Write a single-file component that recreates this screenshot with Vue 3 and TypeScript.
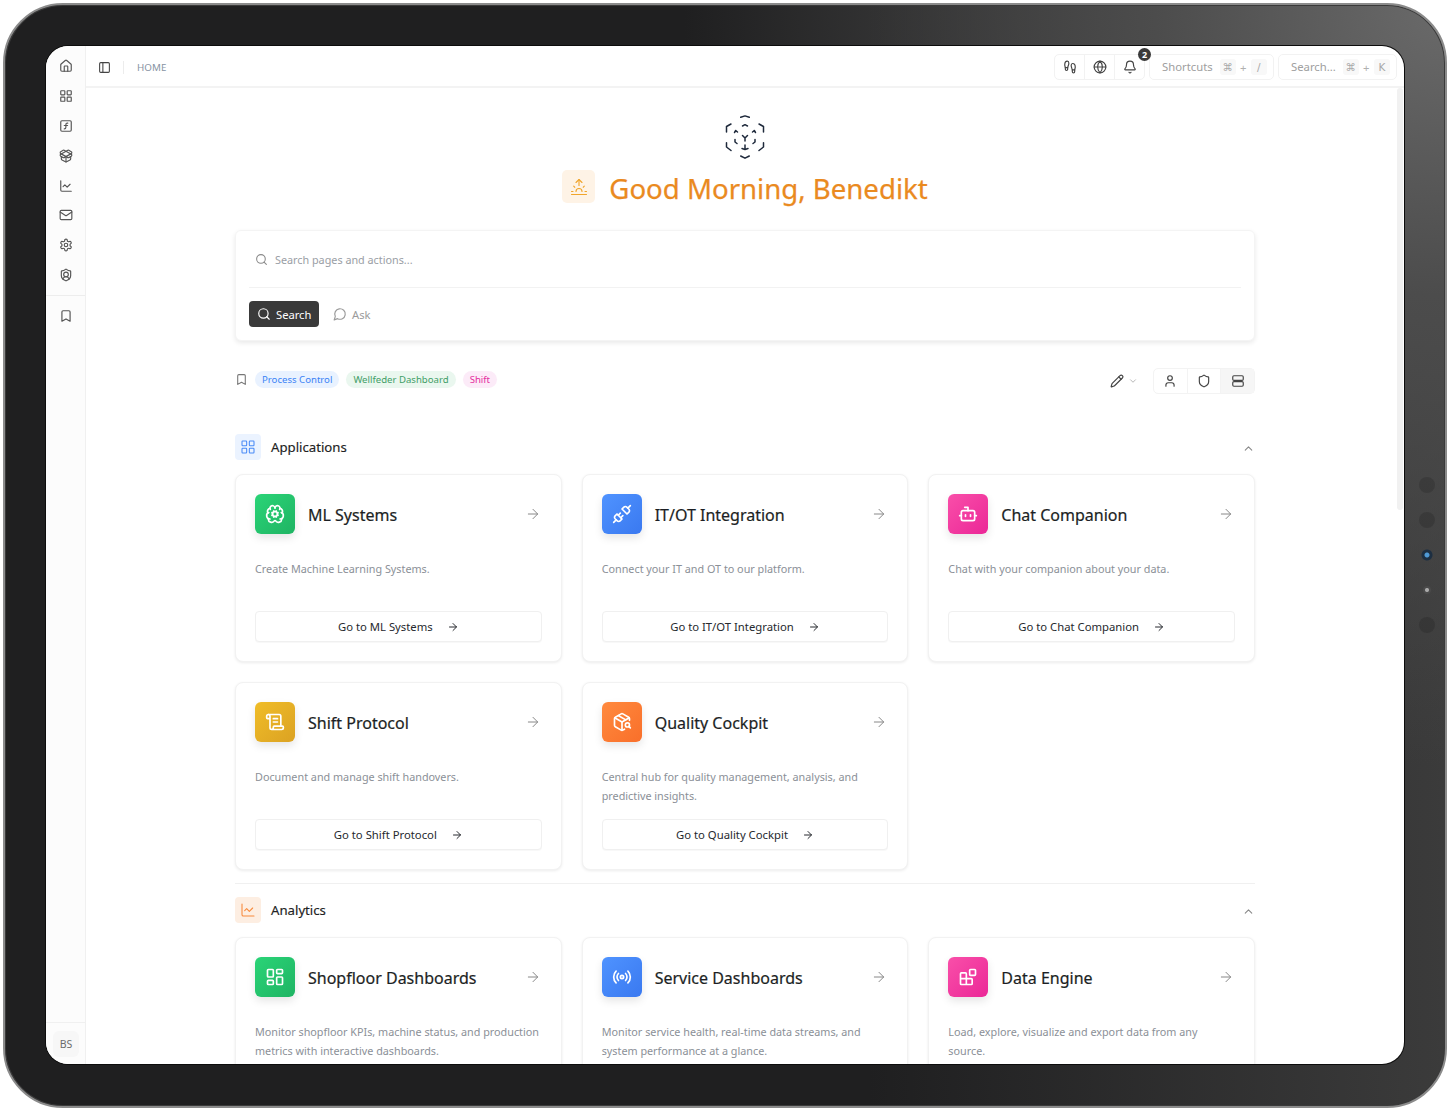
<template>
  <div class="device">
    <div class="sensors">
      <span class="dot"></span>
      <span class="dot"></span>
      <span class="dot cam"></span>
      <span class="dot mic"></span>
      <span class="dot"></span>
    </div>
    <div class="screen">
      <aside class="rail">
        <a v-for="n in railTop" :key="n" class="rail-btn">
          <svg class="ico" viewBox="0 0 24 24" v-html="icons[n]"></svg>
        </a>
        <div class="rail-line"></div>
        <a class="rail-btn bm">
          <svg class="ico" viewBox="0 0 24 24" v-html="icons.bookmark"></svg>
        </a>
        <div class="rail-foot">
          <span class="avatar">BS</span>
        </div>
      </aside>

      <div class="main">
        <header class="topbar">
          <svg class="ico panel" viewBox="0 0 24 24" v-html="icons.panel"></svg>
          <span class="top-sep"></span>
          <span class="crumb">HOME</span>
          <div class="top-right">
            <div class="btn-group">
              <button><svg class="ico" viewBox="0 0 24 24" v-html="icons.footprints"></svg></button>
              <button><svg class="ico" viewBox="0 0 24 24" v-html="icons.globe"></svg></button>
              <button>
                <svg class="ico" viewBox="0 0 24 24" v-html="icons.bell"></svg>
                <span class="badge">2</span>
              </button>
            </div>
            <div class="hint shortcuts">
              <span>Shortcuts</span>
              <kbd>⌘</kbd><i>+</i><kbd>/</kbd>
            </div>
            <div class="hint finder">
              <span>Search...</span>
              <kbd>⌘</kbd><i>+</i><kbd>K</kbd>
            </div>
          </div>
        </header>

        <main class="content">
          <div class="page">
            <svg class="logo" viewBox="0 0 40 46" fill="none" stroke="#1e293b" stroke-width="1.5" stroke-linecap="round" stroke-linejoin="round">
              <path d="M15.7 2.3 20 .9l4.3 1.4M6 9 1.5 11.5V17M34 9l4.5 2.5V17M1.5 27.7V32L6 35.5M38.5 27.7V32L34 35.5M15.7 41l4.3 2.2 4.3-2.2" />
              <path d="M17.5 11 20 9.7l2.5 1.3M9.5 17.5l1.2-2 1.8 1.5M30.5 17.5l-1.2-2-1.8 1.5M17.5 20.5 20 23l2.5-2.5M20 23v3M10 24.5V27l2 1.5M30 24.5V27l-2 1.5M20 30v3.5M17 33.5l3 1 3-1" />
            </svg>

            <div class="greet">
              <span class="sun"><svg class="ico" viewBox="0 0 24 24" v-html="icons.sunrise"></svg></span>
              <h1>Good Morning, Benedikt</h1>
            </div>

            <section class="search-card">
              <div class="search-line">
                <svg class="ico" viewBox="0 0 24 24" v-html="icons.search"></svg>
                <span>Search pages and actions...</span>
              </div>
              <div class="mode-row">
                <button class="mode on">
                  <svg class="ico" viewBox="0 0 24 24" v-html="icons.search"></svg>Search
                </button>
                <button class="mode">
                  <svg class="ico" viewBox="0 0 24 24" v-html="icons.message"></svg>Ask
                </button>
              </div>
            </section>

            <div class="filters">
              <svg class="ico fav" viewBox="0 0 24 24" v-html="icons.bookmark"></svg>
              <span v-for="c in chips" :key="c.label" class="chip" :class="c.tone">{{ c.label }}</span>
              <div class="tools">
                <svg class="ico pen" viewBox="0 0 24 24" v-html="icons.pencil"></svg>
                <svg class="ico chev" viewBox="0 0 24 24" v-html="icons.down"></svg>
                <div class="view-group">
                  <button><svg class="ico" viewBox="0 0 24 24" v-html="icons.user"></svg></button>
                  <button><svg class="ico" viewBox="0 0 24 24" v-html="icons.shield"></svg></button>
                  <button class="active"><svg class="ico" viewBox="0 0 24 24" v-html="icons.rows"></svg></button>
                </div>
              </div>
            </div>

            <section v-for="s in sections" :key="s.title" class="group" :class="s.cls">
              <div class="group-head">
                <span class="group-ico"><svg class="ico" viewBox="0 0 24 24" v-html="icons[s.icon]"></svg></span>
                <h2>{{ s.title }}</h2>
                <svg class="ico up" viewBox="0 0 24 24" v-html="icons.up"></svg>
              </div>
              <div class="cards">
                <article v-for="c in s.cards" :key="c.title" class="card">
                  <div class="card-head">
                    <span class="tile" :class="c.color"><svg class="ico" viewBox="0 0 24 24" v-html="icons[c.icon]"></svg></span>
                    <h3>{{ c.title }}</h3>
                    <svg class="ico go" viewBox="0 0 24 24" v-html="icons.arrow"></svg>
                  </div>
                  <p>{{ c.desc }}</p>
                  <!-- the analytics row is cut by the screen before its buttons -->
                  <button v-if="s.cls === 'apps'" class="open">
                    Go to {{ c.title }}
                    <svg class="ico" viewBox="0 0 24 24" v-html="icons.arrow"></svg>
                  </button>
                </article>
              </div>
            </section>
          </div>
        </main>
        <div class="scroll-thumb"></div>
      </div>
    </div>
  </div>
</template>

<script setup lang="ts">
interface Card {
  title: string
  desc: string
  icon: string
  color: string
}

const shield =
  '<path d="M20 13c0 5-3.5 7.5-7.66 8.95a1 1 0 0 1-.67-.01C7.5 20.5 4 18 4 13V6a1 1 0 0 1 1-1c2 0 4.5-1.2 6.24-2.72a1.17 1.17 0 0 1 1.52 0C14.51 3.81 17 5 19 5a1 1 0 0 1 1 1z"/>'

const grid =
  '<rect x="3" y="3" width="7" height="7" rx="1"/><rect x="14" y="3" width="7" height="7" rx="1"/><rect x="14" y="14" width="7" height="7" rx="1"/><rect x="3" y="14" width="7" height="7" rx="1"/>'

const chart = '<path d="M3 3v16a2 2 0 0 0 2 2h16"/><path d="m19 9-5 5-4-4-3 3"/>'

const icons: Record<string, string> = {
  home: '<path d="M15 21v-8a1 1 0 0 0-1-1h-4a1 1 0 0 0-1 1v8"/><path d="M3 10a2 2 0 0 1 .709-1.528l7-5.999a2 2 0 0 1 2.582 0l7 5.999A2 2 0 0 1 21 10v9a2 2 0 0 1-2 2H5a2 2 0 0 1-2-2z"/>',
  grid,
  fn: '<rect x="3" y="3" width="18" height="18" rx="2"/><path d="M9 17c2 0 2.8-1 2.8-2.8V10c0-2 1-3.3 3.2-3"/><path d="M9 11.2h5.7"/>',
  box: '<path d="M12 22v-9"/><path d="M15.17 2.21a1.67 1.67 0 0 1 1.63 0L21 4.57a1.93 1.93 0 0 1 0 3.36L8.82 14.79a1.655 1.655 0 0 1-1.64 0L3 12.43a1.93 1.93 0 0 1 0-3.36z"/><path d="M20 13v3.87a2.06 2.06 0 0 1-1.11 1.83l-6 3.08a1.93 1.93 0 0 1-1.78 0l-6-3.08A2.06 2.06 0 0 1 4 16.87V13"/><path d="M21 12.43a1.93 1.93 0 0 0 0-3.36L8.83 2.2a1.64 1.64 0 0 0-1.63 0L3 4.57a1.93 1.93 0 0 0 0 3.36l12.18 6.86a1.636 1.636 0 0 0 1.63 0z"/>',
  chart,
  mail: '<path d="m22 7-8.991 5.727a2 2 0 0 1-2.009 0L2 7"/><rect x="2" y="4" width="20" height="16" rx="2"/>',
  settings:
    '<path d="M12.22 2h-.44a2 2 0 0 0-2 2v.18a2 2 0 0 1-1 1.73l-.43.25a2 2 0 0 1-2 0l-.15-.08a2 2 0 0 0-2.73.73l-.22.38a2 2 0 0 0 .73 2.73l.15.1a2 2 0 0 1 1 1.72v.51a2 2 0 0 1-1 1.74l-.15.09a2 2 0 0 0-.73 2.73l.22.38a2 2 0 0 0 2.73.73l.15-.08a2 2 0 0 1 2 0l.43.25a2 2 0 0 1 1 1.73V20a2 2 0 0 0 2 2h.44a2 2 0 0 0 2-2v-.18a2 2 0 0 1 1-1.73l.43-.25a2 2 0 0 1 2 0l.15.08a2 2 0 0 0 2.73-.73l.22-.39a2 2 0 0 0-.73-2.73l-.15-.08a2 2 0 0 1-1-1.74v-.5a2 2 0 0 1 1-1.74l.15-.09a2 2 0 0 0 .73-2.73l-.22-.38a2 2 0 0 0-2.73-.73l-.15.08a2 2 0 0 1-2 0l-.43-.25a2 2 0 0 1-1-1.73V4a2 2 0 0 0-2-2z"/><circle cx="12" cy="12" r="3"/>',
  shieldUser: shield + '<path d="M6.376 18.91a6 6 0 0 1 11.249.003"/><circle cx="12" cy="11" r="4"/>',
  bookmark: '<path d="m19 21-7-4-7 4V5a2 2 0 0 1 2-2h10a2 2 0 0 1 2 2v16z"/>',
  panel: '<rect x="3" y="3" width="18" height="18" rx="2"/><path d="M9 3v18"/>',
  footprints:
    '<path d="M4 16v-2.38C4 11.5 2.97 10.5 3 8c.03-2.72 1.49-6 4.5-6C9.37 2 10 3.8 10 5.5c0 3.11-2 5.66-2 8.68V16a2 2 0 1 1-4 0Z"/><path d="M20 20v-2.38c0-2.12 1.03-3.12 1-5.62-.03-2.72-1.49-6-4.5-6C14.63 6 14 7.8 14 9.5c0 3.11 2 5.66 2 8.68V20a2 2 0 1 0 4 0Z"/><path d="M16 17h4"/><path d="M4 13h4"/>',
  globe: '<circle cx="12" cy="12" r="10"/><path d="M12 2a14.5 14.5 0 0 0 0 20 14.5 14.5 0 0 0 0-20"/><path d="M2 12h20"/>',
  bell: '<path d="M10.268 21a2 2 0 0 0 3.464 0"/><path d="M3.262 15.326A1 1 0 0 0 4 17h16a1 1 0 0 0 .74-1.673C19.41 13.956 18 12.499 18 8A6 6 0 0 0 6 8c0 4.499-1.411 5.956-2.738 7.326"/>',
  search: '<path d="m21 21-4.34-4.34"/><circle cx="11" cy="11" r="8"/>',
  message: '<path d="M7.9 20A9 9 0 1 0 4 16.1L2 22Z"/>',
  user: '<path d="M19 21v-2a4 4 0 0 0-4-4H9a4 4 0 0 0-4 4v2"/><circle cx="12" cy="7" r="4"/>',
  shield,
  rows: '<rect x="3" y="3" width="18" height="8" rx="2"/><rect x="3" y="13" width="18" height="8" rx="2"/>',
  pencil:
    '<path d="M21.174 6.812a1 1 0 0 0-3.986-3.987L3.842 16.174a2 2 0 0 0-.5.83l-1.321 4.352a.5.5 0 0 0 .623.622l4.353-1.32a2 2 0 0 0 .83-.497z"/><path d="m15 5 4 4"/>',
  down: '<path d="m6 9 6 6 6-6"/>',
  up: '<path d="m18 15-6-6-6 6"/>',
  arrow: '<path d="M5 12h14"/><path d="m12 5 7 7-7 7"/>',
  sunrise:
    '<path d="M12 2v8"/><path d="m4.93 10.93 1.41 1.41"/><path d="M2 18h2"/><path d="M20 18h2"/><path d="m19.07 10.93-1.41 1.41"/><path d="M22 22H2"/><path d="m8 6 4-4 4 4"/><path d="M16 18a4 4 0 0 0-8 0"/>',
  brain:
    '<path d="m10.852 14.772-.383.923"/><path d="m10.852 9.228-.383-.923"/><path d="m13.148 14.772.382.924"/><path d="m13.531 8.305-.383.923"/><path d="m14.772 10.852.923-.383"/><path d="m14.772 13.148.923.383"/><path d="M17.598 6.5A3 3 0 1 0 12 5a3 3 0 0 0-5.63-1.446 3 3 0 0 0-.368 1.571 4 4 0 0 0-2.525 5.771"/><path d="M17.998 5.125a4 4 0 0 1 2.525 5.771"/><path d="M19.505 10.294a4 4 0 0 1-1.5 7.706"/><path d="M4.032 17.483A4 4 0 0 0 11.464 20c.18-.311.892-.311 1.072 0a4 4 0 0 0 7.432-2.516"/><path d="M4.5 10.291A4 4 0 0 0 6 18"/><path d="M6.002 5.125a3 3 0 0 0 .4 1.375"/><path d="m9.228 10.852-.923-.383"/><path d="m9.228 13.148-.923.383"/><circle cx="12" cy="12" r="3"/>',
  unplug:
    '<path d="m19 5 3-3"/><path d="m2 22 3-3"/><path d="M6.3 20.3a2.4 2.4 0 0 0 3.4 0L12 18l-6-6-2.3 2.3a2.4 2.4 0 0 0 0 3.4Z"/><path d="M7.5 13.5 10 11"/><path d="M10.5 16.5 13 14"/><path d="m12 6 6 6 2.3-2.3a2.4 2.4 0 0 0 0-3.4l-2.6-2.6a2.4 2.4 0 0 0-3.4 0Z"/>',
  bot: '<path d="M12 8V4H8"/><rect x="4" y="8" width="16" height="12" rx="2"/><path d="M2 14h2"/><path d="M20 14h2"/><path d="M15 13v2"/><path d="M9 13v2"/>',
  scroll:
    '<path d="M15 12h-5"/><path d="M15 8h-5"/><path d="M19 17V5a2 2 0 0 0-2-2H4"/><path d="M8 21h12a2 2 0 0 0 2-2v-1a1 1 0 0 0-1-1H11a1 1 0 0 0-1 1v1a2 2 0 1 1-4 0V5a2 2 0 1 0-4 0v2a1 1 0 0 0 1 1h3"/>',
  packageSearch:
    '<path d="M21 10V8a2 2 0 0 0-1-1.73l-7-4a2 2 0 0 0-2 0l-7 4A2 2 0 0 0 3 8v8a2 2 0 0 0 1 1.73l7 4a2 2 0 0 0 2 0l2-1.14"/><path d="m7.5 4.27 9 5.15"/><polyline points="3.29 7 12 12 20.71 7"/><line x1="12" x2="12" y1="22" y2="12"/><circle cx="18.5" cy="15.5" r="2.5"/><path d="M20.27 17.27 22 19"/>',
  dashboard:
    '<rect x="3" y="3" width="7" height="9" rx="1"/><rect x="14" y="3" width="7" height="5" rx="1"/><rect x="14" y="12" width="7" height="9" rx="1"/><rect x="3" y="16" width="7" height="5" rx="1"/>',
  radio:
    '<path d="M16.247 7.761a6 6 0 0 1 0 8.478"/><path d="M19.075 4.933a10 10 0 0 1 0 14.134"/><path d="M4.925 19.067a10 10 0 0 1 0-14.134"/><path d="M7.753 16.239a6 6 0 0 1 0-8.478"/><circle cx="12" cy="12" r="2"/>',
  blocks:
    '<rect x="14" y="3" width="7" height="7" rx="1"/><path d="M10 21V8a1 1 0 0 0-1-1H4a1 1 0 0 0-1 1v12a1 1 0 0 0 1 1h12a1 1 0 0 0 1-1v-5a1 1 0 0 0-1-1H3"/>',
}

const railTop = ['home', 'grid', 'fn', 'box', 'chart', 'mail', 'settings', 'shieldUser']

const chips = [
  { label: 'Process Control', tone: 'blue' },
  { label: 'Wellfeder Dashboard', tone: 'green' },
  { label: 'Shift', tone: 'pink' },
]

const applications: Card[] = [
  { title: 'ML Systems', desc: 'Create Machine Learning Systems.', icon: 'brain', color: 'c-green' },
  { title: 'IT/OT Integration', desc: 'Connect your IT and OT to our platform.', icon: 'unplug', color: 'c-blue' },
  { title: 'Chat Companion', desc: 'Chat with your companion about your data.', icon: 'bot', color: 'c-pink' },
  { title: 'Shift Protocol', desc: 'Document and manage shift handovers.', icon: 'scroll', color: 'c-yellow' },
  {
    title: 'Quality Cockpit',
    desc: 'Central hub for quality management, analysis, and predictive insights.',
    icon: 'packageSearch',
    color: 'c-orange',
  },
]

const analytics: Card[] = [
  {
    title: 'Shopfloor Dashboards',
    desc: 'Monitor shopfloor KPIs, machine status, and production metrics with interactive dashboards.',
    icon: 'dashboard',
    color: 'c-green',
  },
  {
    title: 'Service Dashboards',
    desc: 'Monitor service health, real-time data streams, and system performance at a glance.',
    icon: 'radio',
    color: 'c-blue',
  },
  {
    title: 'Data Engine',
    desc: 'Load, explore, visualize and export data from any source.',
    icon: 'blocks',
    color: 'c-pink',
  },
]

const sections = [
  { title: 'Applications', icon: 'grid', cls: 'apps', cards: applications },
  { title: 'Analytics', icon: 'chart', cls: 'stats', cards: analytics },
]
</script>

<style>
html,
body {
  margin: 0;
  background: #fff;
  overflow: hidden;
}
</style>

<style scoped>
.device {
  position: relative;
  box-sizing: border-box;
  width: 1444px;
  height: 1105px;
  margin: 3px 0 0 3px;
  padding: 41px;
  border: 2px solid #8b8b8b;
  border-radius: 60px;
  box-shadow: inset 0 0 0 1px #3a3a3a;
  background:
    radial-gradient(circle at 100% 0, #6a6a6a 0, #4c4c4c 16%, rgba(60, 60, 60, 0) 42%),
    linear-gradient(90deg, rgba(0, 0, 0, 0) 60%, #3b3b3b 100%),
    #1f1f20;
  font-family: 'Noto Sans', 'Open Sans', sans-serif;
}

.sensors {
  position: absolute;
  right: 10px;
  top: 472px;
  display: flex;
  flex-direction: column;
  align-items: center;
  gap: 19px;
}
.dot {
  width: 16px;
  height: 16px;
  border-radius: 50%;
  background: rgba(0, 0, 0, 0.14);
}
.dot.cam {
  background: radial-gradient(circle, #4f9ad6 0 2px, #1d2f42 3px 5px, rgba(0, 0, 0, 0) 6px);
}
.dot.mic {
  background: radial-gradient(circle, #aaa 0 1.5px, #4a4a4a 2.5px 3.5px, rgba(0, 0, 0, 0) 4.5px);
}

.screen {
  display: flex;
  height: 1018px;
  width: 1358px;
  overflow: hidden;
  border-radius: 22px;
  background: #fff;
  box-shadow: 0 0 0 1px #0c0c0c;
}

.ico {
  width: 14px;
  height: 14px;
  flex: none;
  fill: none;
  stroke: currentColor;
  stroke-width: 2;
  stroke-linecap: round;
  stroke-linejoin: round;
}

.rail {
  width: 40px;
  flex: none;
  box-sizing: border-box;
  display: flex;
  flex-direction: column;
  align-items: center;
  padding-top: 5.5px;
  background: #fcfcfc;
  border-right: 1px solid #f0f0f0;
  color: #555;
}
.rail-btn {
  height: 29.8px;
  padding-left: 1px;
  display: flex;
  align-items: center;
  justify-content: center;
}
.rail-btn .ico {
  width: 14px;
  height: 14px;
}
.rail-line {
  align-self: stretch;
  height: 1px;
  margin: 5px 0 5px;
  background: #ededed;
}
.rail-foot {
  align-self: stretch;
  margin-top: auto;
  display: flex;
  justify-content: center;
  padding: 8px 0 7px 1px;
  border-top: 1px solid #f0f0f0;
}
.avatar {
  width: 26px;
  height: 26px;
  border-radius: 6px;
  background: #f7f7f7;
  display: flex;
  align-items: center;
  justify-content: center;
  font-size: 10.5px;
  color: #6b6b6b;
}

.main {
  position: relative;
  flex: 1;
  min-width: 0;
  display: flex;
  flex-direction: column;
}

.topbar {
  height: 42px;
  flex: none;
  box-sizing: border-box;
  display: flex;
  align-items: center;
  padding: 2px 7px 0 12px;
  border-bottom: 2px solid #f3f3f3;
}
.panel {
  width: 13px;
  height: 13px;
  color: #444;
}
.top-sep {
  width: 1px;
  height: 13px;
  margin: 0 13px 0 12px;
  background: #ececec;
}
.crumb {
  font-size: 9.8px;
  letter-spacing: 0.1px;
  color: #8793a3;
}
.top-right {
  margin-left: auto;
  display: flex;
  gap: 4px;
}
.btn-group {
  box-sizing: border-box;
  width: 91px;
  display: flex;
  height: 26px;
  border: 1px solid #f2f2f2;
  border-radius: 5px;
}
.btn-group button {
  position: relative;
  flex: 1;
  padding: 0;
  border: 0;
  border-right: 1px solid #f2f2f2;
  background: none;
  color: #444;
  display: flex;
  align-items: center;
  justify-content: center;
}
.btn-group button:last-child {
  border-right: 0;
}
.badge {
  position: absolute;
  top: -7px;
  right: -7px;
  width: 13px;
  height: 13px;
  border-radius: 50%;
  background: #3a3a3a;
  color: #fff;
  font-family: 'Noto Sans', sans-serif;
  font-size: 9px;
  font-weight: 700;
  line-height: 13px;
  text-align: center;
}
.hint {
  box-sizing: border-box;
  height: 26px;
  display: flex;
  align-items: center;
  border: 1px solid #f2f2f2;
  border-radius: 5px;
  font-size: 11.3px;
  color: #a0a0a0;
}
.shortcuts {
  width: 125px;
  padding-left: 12px;
}
.finder {
  width: 119px;
  padding-left: 12px;
}
.hint span {
  margin: 0 7px 1px 0;
}
.hint kbd {
  min-width: 16px;
  height: 16px;
  border-radius: 3px;
  background: #f8f8f8;
  font-family: 'DejaVu Sans', sans-serif;
  font-size: 10.5px;
  line-height: 16px;
  text-align: center;
  color: #a8a8a8;
}
.hint i {
  width: 15px;
  font-style: normal;
  text-align: center;
  color: #b0b0b0;
}

.content {
  flex: 1;
  min-height: 0;
  overflow: hidden;
}
.scroll-thumb {
  position: absolute;
  top: 42px;
  right: 1px;
  width: 6px;
  height: 422px;
  border-radius: 3px;
  background: #f1f1f1;
}

.page {
  width: 1020px;
  margin: 0 auto;
  padding-top: 27px;
  display: flex;
  flex-direction: column;
}
.logo {
  width: 40px;
  height: 46px;
  align-self: center;
}
.greet {
  margin-top: 9px;
  height: 33px;
  display: flex;
  align-items: center;
  justify-content: center;
  gap: 14px;
}
.sun {
  width: 33px;
  height: 33px;
  border-radius: 5px;
  background: #fef3e6;
  color: #f0a52b;
  display: flex;
  align-items: center;
  justify-content: center;
}
.sun .ico {
  width: 18px;
  height: 18px;
  stroke-width: 1.5;
}
h1 {
  margin: 3px 0 0;
  font-size: 27.6px;
  line-height: 38px;
  font-weight: 400;
  color: #ea8a1f;
  -webkit-text-stroke: 0.25px #ea8a1f;
}

.search-card {
  margin-top: 27px;
  height: 111px;
  box-sizing: border-box;
  padding: 0 13px;
  border: 1px solid #f4f4f4;
  border-radius: 6px;
  background: #fff;
  box-shadow: 0 2px 5px rgba(0, 0, 0, 0.09);
}
.search-line {
  height: 56px;
  display: flex;
  align-items: center;
  gap: 7px;
  border-bottom: 1px solid #f2f2f2;
  padding-left: 6px;
  font-size: 10.8px;
  color: #9a9ea5;
}
.search-line .ico {
  width: 13px;
  height: 13px;
  color: #8a8a8a;
}
.mode-row {
  margin-top: 13px;
  display: flex;
  gap: 6px;
}
.mode {
  height: 26px;
  padding: 0 8px;
  border: 0;
  border-radius: 4px;
  background: none;
  display: flex;
  align-items: center;
  gap: 5px;
  font-family: inherit;
  font-size: 11.2px;
  color: #9b9b9b;
}
.mode .ico {
  width: 14px;
  height: 14px;
}
.mode.on {
  width: 70px;
  background: #3a3a3a;
  color: #fff;
}

.filters {
  margin-top: 27px;
  height: 26px;
  display: flex;
  align-items: center;
  gap: 7px;
}
.fav {
  width: 13px;
  height: 13px;
  margin-top: -4px;
  color: #777;
}
.chip {
  height: 17px;
  margin-top: -4px;
  padding: 0 7px;
  border-radius: 9px;
  font-size: 9.6px;
  line-height: 17px;
}
.chip.blue {
  background: #e9f2ff;
  color: #3b82f6;
}
.chip.green {
  background: #eaf7ef;
  color: #3f9e67;
}
.chip.pink {
  background: #fcebf8;
  color: #e52f9f;
}
.tools {
  margin-left: auto;
  display: flex;
  align-items: center;
  color: #444;
}
.pen {
  width: 14px;
  height: 14px;
}
.chev {
  width: 10px;
  height: 10px;
  margin: 0 15px 0 4px;
  color: #aaa;
}
.view-group {
  box-sizing: border-box;
  width: 102px;
  display: flex;
  height: 26px;
  border: 1px solid #f3f3f3;
  border-radius: 5px;
}
.view-group button {
  flex: 1;
  padding: 0;
  border: 0;
  border-right: 1px solid #f3f3f3;
  background: none;
  color: #444;
  display: flex;
  align-items: center;
  justify-content: center;
}
.view-group button:last-child {
  border-right: 0;
}
.view-group .active {
  background: #f6f6f6;
}

.group.apps {
  margin-top: 40px;
  padding-bottom: 13px;
  border-bottom: 1px solid #f0f0f0;
}
.group.stats {
  margin-top: 13px;
}
.group-head {
  height: 26px;
  display: flex;
  align-items: center;
  gap: 10px;
}
.group-ico {
  width: 26px;
  height: 26px;
  border-radius: 4px;
  display: flex;
  align-items: center;
  justify-content: center;
}
.apps .group-ico {
  background: #ebf3ff;
  color: #4a8cf7;
}
.stats .group-ico {
  background: #fdeee2;
  color: #f88a3c;
}
.group-ico .ico {
  width: 16px;
  height: 16px;
  stroke-width: 1.6;
}
h2 {
  margin: 0;
  font-size: 13.2px;
  font-weight: 400;
  color: #222;
  -webkit-text-stroke: 0.15px #222;
}
.up {
  margin: 2px 0 0 auto;
  width: 13px;
  height: 13px;
  color: #888;
}
.cards {
  margin-top: 14px;
  display: grid;
  grid-template-columns: repeat(3, 1fr);
  gap: 20px;
}
.card {
  box-sizing: border-box;
  min-height: 188px;
  padding: 19px;
  display: flex;
  flex-direction: column;
  border: 1px solid #f2f2f2;
  border-radius: 8px;
  background: #fff;
  box-shadow: 0 1px 3px rgba(0, 0, 0, 0.08);
}
.card-head {
  height: 40px;
  display: flex;
  align-items: center;
}
.tile {
  width: 40px;
  height: 40px;
  border-radius: 6px;
  color: #fff;
  display: flex;
  align-items: center;
  justify-content: center;
  box-shadow: 0 4px 8px rgba(0, 0, 0, 0.1);
}
.tile .ico {
  width: 20px;
  height: 20px;
}
.c-green {
  background: linear-gradient(135deg, #2ad477, #1fb463);
}
.c-blue {
  background: linear-gradient(135deg, #4f93ff, #3a79f0);
}
.c-pink {
  background: linear-gradient(135deg, #f94fa9, #eb2797);
}
.c-yellow {
  background: linear-gradient(135deg, #f0bd28, #dba223);
}
.c-orange {
  background: linear-gradient(135deg, #ff8a3e, #f96f2a);
}
h3 {
  margin: 2px 0 0 13px;
  font-size: 16px;
  font-weight: 400;
  color: #1c1f24;
  -webkit-text-stroke: 0.2px #1c1f24;
}
.go {
  margin: 0 1px 0 auto;
  width: 16px;
  height: 16px;
  color: #888;
  stroke-width: 1.5;
}
.card p {
  margin: 25px 0 0;
  font-size: 10.8px;
  line-height: 19px;
  color: #8b9097;
}
.open {
  margin-top: auto;
  height: 31px;
  flex: none;
  border: 1px solid #f0f0f0;
  border-radius: 4px;
  background: #fff;
  box-shadow: 0 1px 1px rgba(0, 0, 0, 0.03);
  display: flex;
  align-items: center;
  justify-content: center;
  gap: 14px;
  font-family: inherit;
  font-size: 11.3px;
  color: #26292e;
}
.open .ico {
  width: 12px;
  height: 12px;
}
</style>
